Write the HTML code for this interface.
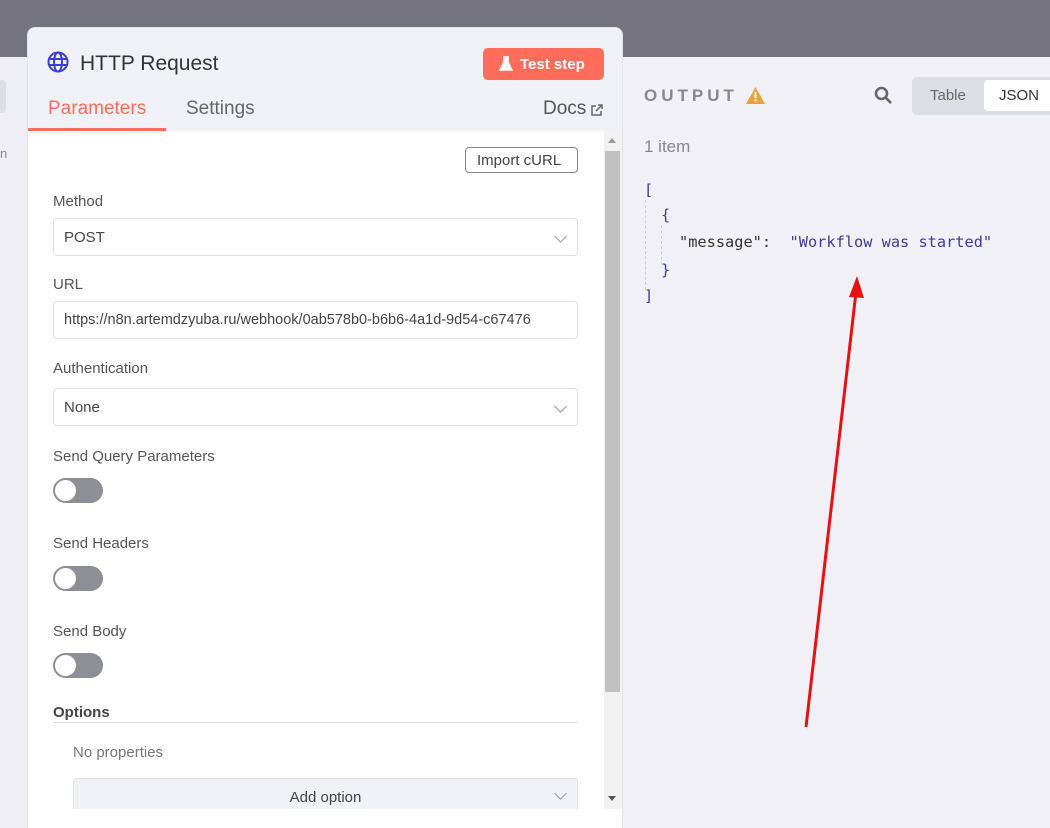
<!DOCTYPE html>
<html><head><meta charset="utf-8"><style>
*{box-sizing:border-box;margin:0;padding:0}
body{width:1050px;height:828px;overflow:hidden;background:#f0f0f6;font-family:"Liberation Sans",sans-serif;position:relative;color:#555}
.top{position:absolute;left:0;top:0;width:1050px;height:57px;background:#75737f}
.left{position:absolute;left:0;top:57px;width:27px;height:771px;background:#eeeef4}
.lcard{position:absolute;left:0;top:80px;width:6px;height:33px;background:#dcdde6;border-radius:0 4px 4px 0}
.panel{position:absolute;left:27px;top:27px;width:596px;height:801px;background:#f0f1f6;border-radius:8px 8px 0 0;border:1px solid #e2e2ea;border-bottom:0;overflow:hidden}
.abs{position:absolute}
.body{position:absolute;left:0;top:103px;width:576px;height:678px;background:#fff}
.lbl{position:absolute;left:25px;font-size:15px;color:#555}
.inp{position:absolute;left:25px;width:525px;height:38px;border:1px solid #dcdfe6;border-radius:4px;font-size:15px;color:#444;padding:10px 10px;background:#fff;white-space:nowrap;overflow:hidden}
.chev{position:absolute;right:12px;top:13px;width:9px;height:9px;border-right:1.3px solid #999;border-bottom:1.3px solid #999;transform:rotate(45deg)}
.tog{position:absolute;left:25px;width:50px;height:25px;border-radius:13px;background:#8e8e96}
.tog:after{content:"";position:absolute;left:2px;top:2px;width:21px;height:21px;border-radius:50%;background:#fff}
.mono{font-family:"DejaVu Sans Mono","Liberation Mono",monospace;font-size:15.3px;color:#3d3aa0}
</style></head><body>
<div class="top"></div>
<div class="left"></div><div class="lcard"></div>
<div class="abs" style="left:0;top:146px;font-size:13px;color:#888">n</div>
<div class="panel">
 <svg class="abs" style="left:19px;top:23px" width="22" height="22" viewBox="0 0 22 22" fill="none" stroke="#3b3fd6" stroke-width="2"><circle cx="11" cy="11" r="9.5"/><ellipse cx="11" cy="11" rx="4" ry="9.5"/><line x1="1.5" y1="8" x2="20.5" y2="8"/><line x1="1.5" y1="14" x2="20.5" y2="14"/></svg>
 <div class="abs" style="left:52px;top:24px;font-size:21px;color:#333">HTTP Request</div>
 <div class="abs" style="left:455px;top:20px;width:121px;height:32px;background:#ff6d5a;border-radius:5px;color:#fff;font-size:15px;font-weight:bold;padding:8px 0 0 37px">Test step</div>
 <svg class="abs" style="left:471px;top:28px" width="14" height="16" viewBox="0 0 14 16"><path d="M4 1h6M5 1v5L1 14h12L9 6V1" fill="#fff" stroke="#fff" stroke-width="1.5"/></svg>
 <div class="abs" style="left:20px;top:70px;font-size:19px;color:#ff6d5a">Parameters</div>
 <div class="abs" style="left:0;top:100px;width:138px;height:3px;background:#ff6d5a"></div>
 <div class="abs" style="left:158px;top:70px;font-size:19px;color:#666">Settings</div>
 <div class="abs" style="left:515px;top:70px;font-size:19px;color:#555">Docs</div>
 <svg class="abs" style="left:562px;top:76px" width="13" height="13" viewBox="0 0 13 13" fill="none" stroke="#666" stroke-width="1.5"><path d="M6 2H2v9h9V7M8 1h4v4M12 1L6 7"/></svg>
 <div class="body">
  <div class="abs" style="left:437px;top:16px;width:113px;height:26px;border:1px solid #888;border-radius:4px;font-size:15px;color:#444;padding:4px 0 0 11px">Import cURL</div>
  <div class="lbl" style="top:62px">Method</div>
  <div class="inp" style="top:87px">POST<div class="chev"></div></div>
  <div class="lbl" style="top:145px">URL</div>
  <div class="inp" style="top:170px;font-size:14.5px">https://n8n.artemdzyuba.ru/webhook/0ab578b0-b6b6-4a1d-9d54-c67476</div>
  <div class="lbl" style="top:229px">Authentication</div>
  <div class="inp" style="top:257px">None<div class="chev"></div></div>
  <div class="lbl" style="top:317px">Send Query Parameters</div>
  <div class="tog" style="top:347px"></div>
  <div class="lbl" style="top:404px">Send Headers</div>
  <div class="tog" style="top:435px"></div>
  <div class="lbl" style="top:492px">Send Body</div>
  <div class="tog" style="top:522px"></div>
  <div class="lbl" style="top:573px;color:#444;font-weight:bold">Options</div>
  <div class="abs" style="left:25px;top:591px;width:525px;height:1px;background:#ddd"></div>
  <div class="abs" style="left:45px;top:613px;font-size:15px;color:#777">No properties</div>
  <div class="abs" style="left:45px;top:647px;width:505px;height:34px;background:#f0f1f6;border:1px solid #dcdfe6;border-radius:4px;font-size:15px;color:#444;text-align:center;padding-top:10px">Add option<div class="chev" style="top:10px"></div></div>
 </div>
 <div class="abs" style="left:576px;top:103px;width:17px;height:678px;background:#f2f2f2"></div>
 <div class="abs" style="left:577px;top:123px;width:15px;height:541px;background:#c1c1c1"></div>
 <div class="abs" style="left:580px;top:110px;width:0;height:0;border:4px solid transparent;border-bottom:5px solid #999;border-top:0"></div>
 <div class="abs" style="left:580px;top:768px;width:0;height:0;border:4px solid transparent;border-top:5px solid #555;border-bottom:0"></div>
 <div class="abs" style="left:0;top:781px;width:594px;height:40px;background:#fff"></div>
</div>
<div class="abs" style="left:644px;top:86px;font-size:17px;letter-spacing:4px;font-weight:bold;color:#888">OUTPUT</div>
<svg class="abs" style="left:746px;top:87px" width="19" height="17" viewBox="0 0 19 17"><path d="M9.5 0L19 17H0Z" fill="#e8a33b"/><rect x="8.5" y="5" width="2" height="6" fill="#fff"/><rect x="8.5" y="12.5" width="2" height="2" fill="#fff"/></svg>
<svg class="abs" style="left:874px;top:86px" width="19" height="19" viewBox="0 0 19 19" fill="none" stroke="#666" stroke-width="2.6"><circle cx="7.5" cy="7.5" r="5.5"/><line x1="11.5" y1="11.5" x2="17" y2="17"/></svg>
<div class="abs" style="left:912px;top:77px;width:138px;height:38px;background:#dcdee6;border-radius:5px 0 0 5px"></div>
<div class="abs" style="left:930px;top:87px;font-size:15px;color:#666">Table</div>
<div class="abs" style="left:984px;top:80px;width:66px;height:31px;background:#fff;border-radius:4px 0 0 4px;font-size:15px;color:#333;padding:7px 0 0 15px">JSON</div>
<div class="abs" style="left:644px;top:137px;font-size:17px;color:#888">1 item</div>
<div class="abs" style="left:645px;top:200px;width:1px;height:90px;border-left:1px dashed #ccc"></div>
<div class="abs" style="left:661px;top:225px;width:1px;height:40px;border-left:1px dashed #ccc"></div>
<div class="abs mono" style="left:644px;top:181px">[</div>
<div class="abs mono" style="left:661px;top:206px">{</div>
<div class="abs mono" style="left:679px;top:233px;white-space:pre"><span style="color:#333">"message":</span>  "Workflow was started"</div>
<div class="abs mono" style="left:661px;top:261px">}</div>
<div class="abs mono" style="left:644px;top:287px">]</div>
<svg class="abs" style="left:0;top:0" width="1050" height="828"><line x1="806" y1="727" x2="856" y2="292" stroke="#e81010" stroke-width="3"/><path d="M857 276L849 297L864 298Z" fill="#e81010"/></svg>
</body></html>
